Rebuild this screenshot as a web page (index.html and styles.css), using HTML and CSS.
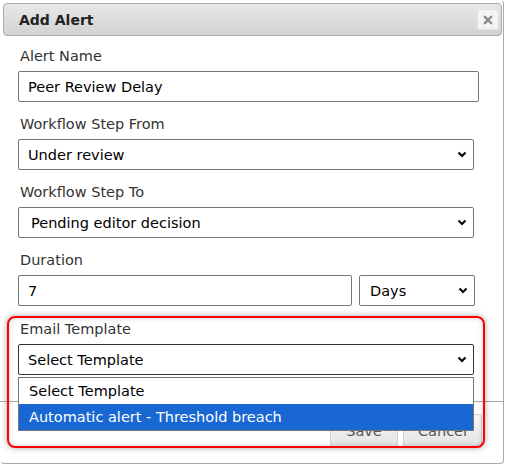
FILE: index.html
```html
<!DOCTYPE html>
<html>
<head>
<meta charset="utf-8">
<link rel="stylesheet" href="styles.css">
</head>
<body>
<div class="dialog">
  <div class="titlebar">
    <span class="title">Add Alert</span>
    <span class="close"><svg width="10" height="10" viewBox="0 0 10 10"><path d="M2 2 L8 8 M8 2 L2 8" stroke="#8a8a8a" stroke-width="2.4" stroke-linecap="square"/></svg></span>
  </div>
  <div class="content">
    <div class="group">
      <div class="label">Alert Name</div>
      <div class="input wide">Peer Review Delay</div>
    </div>
    <div class="group">
      <div class="label">Workflow Step From</div>
      <div class="select full"><span>Under review</span><svg class="chev" width="10" height="7" viewBox="0 0 10 7"><path d="M1.5 1.5 L5 5 L8.5 1.5" fill="none" stroke="#000" stroke-width="2"/></svg></div>
    </div>
    <div class="group">
      <div class="label">Workflow Step To</div>
      <div class="select full indent"><span>Pending editor decision</span><svg class="chev" width="10" height="7" viewBox="0 0 10 7"><path d="M1.5 1.5 L5 5 L8.5 1.5" fill="none" stroke="#000" stroke-width="2"/></svg></div>
    </div>
    <div class="group">
      <div class="label">Duration</div>
      <div class="row">
        <div class="input dur">7</div>
        <div class="select unit"><span>Days</span><svg class="chev" width="10" height="7" viewBox="0 0 10 7"><path d="M1.5 1.5 L5 5 L8.5 1.5" fill="none" stroke="#000" stroke-width="2"/></svg></div>
      </div>
    </div>
    <div class="group last">
      <div class="label">Email Template</div>
      <div class="select full open"><span>Select Template</span><svg class="chev" width="10" height="7" viewBox="0 0 10 7"><path d="M1.5 1.5 L5 5 L8.5 1.5" fill="none" stroke="#000" stroke-width="2"/></svg></div>
    </div>
  </div>
  <div class="footer">
    <button class="btn save">Save</button>
    <button class="btn cancel">Cancel</button>
  </div>
  <div class="listbox">
    <div class="option">Select Template</div>
    <div class="option selected">Automatic alert - Threshold breach</div>
  </div>
  <div class="highlight"></div>
</div>
</body>
</html>
```
FILE: styles.css
```css
html, body {
  margin: 0;
  padding: 0;
  background: #fff;
}
body {
  font-family: "DejaVu Sans", Verdana, sans-serif;
  font-size: 14.5px;
  color: #222;
}
.dialog {
  position: relative;
  width: 502px;
  height: 462px;
  border: 1px solid #aaa;
  border-top-color: transparent;
  border-left-color: transparent;
  border-radius: 4px;
  background: #fff;
  display: flex;
  flex-direction: column;
}
.titlebar {
  margin: 2px 1px 0 2px;
  height: 31px;
  border: 1px solid #aaa;
  border-radius: 4px;
  background: linear-gradient(#e8e8e8, #d2d2d2);
  display: flex;
  align-items: center;
  justify-content: space-between;
  padding: 0 2px 0 15px;
}
.title {
  font-weight: bold;
  font-size: 14px;
  color: #222;
}
.close {
  width: 20px;
  height: 19px;
  border: 1px solid #e2e2e2;
  border-radius: 3px;
  background: #f4f4f4;
  display: flex;
  align-items: center;
  justify-content: center;
}
.content {
  padding: 11px 0 0 17px;
  display: flex;
  flex-direction: column;
  gap: 13px;
  height: 354px;
}
.group.last {
  margin-top: 1px;
}
.label {
  font-size: 14.5px;
  color: #333;
  line-height: 18px;
  margin-bottom: 6px;
  padding-left: 2px;
}
.input, .select {
  box-sizing: border-box;
  height: 31px;
  border: 1px solid #767676;
  border-radius: 2px;
  font-size: 14.5px;
  color: #000;
  display: flex;
  align-items: center;
}
.input {
  padding-left: 9px;
}
.input.wide {
  width: 461px;
}
.select {
  padding: 0 6px 0 9px;
  justify-content: space-between;
}
.select.full {
  width: 456px;
}
.select.indent {
  padding-left: 12px;
}
.select.open {
  border-color: #333;
}
.row {
  display: flex;
  gap: 7px;
}
.input.dur {
  width: 334px;
}
.select.unit {
  width: 116px;
  padding-left: 10px;
}
.footer {
  border-top: 1px solid #aaa;
  margin-left: -1px;
  display: flex;
  justify-content: flex-end;
  gap: 5px;
  padding: 12px 21px 0 0;
}
.btn {
  width: 68px;
  height: 33px;
  border: 1px solid #d0d0d0;
  border-radius: 3px;
  background: linear-gradient(#f6f6f6, #e4e4e4);
  font-family: inherit;
  font-size: 14.5px;
  color: #555;
}
.btn.cancel {
  width: 79px;
}
.listbox {
  position: absolute;
  left: 17px;
  top: 376px;
  width: 456px;
  box-sizing: border-box;
  border: 1px solid #767676;
  background: #fff;
}
.option {
  height: 26px;
  line-height: 26px;
  padding-left: 10px;
  font-size: 14.5px;
  color: #000;
}
.option.selected {
  background: #1967d2;
  color: #fff;
}
.highlight {
  position: absolute;
  left: 6px;
  top: 315px;
  width: 474px;
  height: 128px;
  border: 2px solid #f00;
  border-radius: 8px;
  box-shadow: 0 0 6px rgba(0,0,0,0.35), inset 0 0 5px rgba(0,0,0,0.2);
  pointer-events: none;
}
```
